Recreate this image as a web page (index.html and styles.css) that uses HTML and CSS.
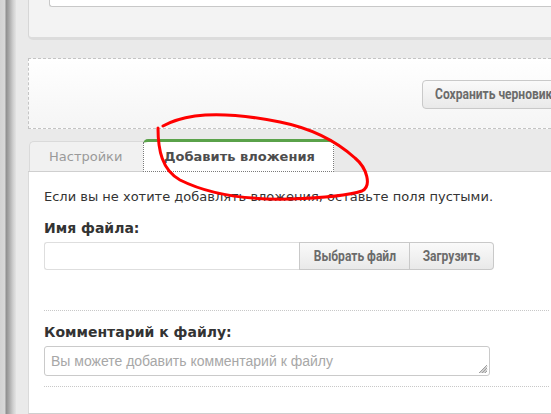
FILE: index.html
```html
<!DOCTYPE html>
<html lang="ru">
<head>
<meta charset="utf-8">
<title>Добавить вложения</title>
<link rel="stylesheet" href="styles.css">
</head>
<body>
<div class="screen">
  <div class="edge"></div>
  <div class="page">
    <div class="top-panel"><div class="top-input"></div></div>
    <div class="draft-box">
      <button class="btn draft-btn"><span class="btn-text">Сохранить черновик</span></button>
    </div>
    <div class="tabs">
      <div class="tab">Настройки</div>
      <div class="tab tab-active"><span class="tab-focus">Добавить вложения</span></div>
    </div>
    <div class="tab-body">
      <p class="hint">Если вы не хотите добавлять вложения, оставьте поля пустыми.</p>
      <div class="field-label">Имя файла:</div>
      <div class="file-row">
        <div class="file-input"></div>
        <button class="btn file-btn"><span class="btn-text">Выбрать файл</span></button>
        <button class="btn file-btn file-btn-last"><span class="btn-text">Загрузить</span></button>
      </div>
      <div class="sep sep-first"></div>
      <div class="field-label">Комментарий к файлу:</div>
      <div class="textarea">
        <span class="placeholder">Вы можете добавить комментарий к файлу</span>
        <svg class="grip" width="10" height="10" viewBox="0 0 10 10">
          <path d="M9 1 L1 9 M9 4 L4 9 M9 7 L7 9 M9 2.5 L2.5 9 M9 5.5 L5.5 9" stroke="#888" stroke-width="0.8"/>
        </svg>
      </div>
      <div class="sep sep-second"></div>
    </div>
  </div>
  <svg class="annotation" width="551" height="414" viewBox="0 0 551 414">
    <path d="M158,128 C158,150 162,170 180,180 C210,195 250,200 290,199 C320,198 350,195 362,191 C372,186 367,168 355,158 C335,140 310,128 280,122 C250,116 220,113 195,116 C182,118 170,122 163,126" fill="none" stroke="#ff0000" stroke-width="3" stroke-linecap="round" stroke-linejoin="round"/>
  </svg>
</div>
</body>
</html>
```

FILE: styles.css
```css
html, body {
  margin: 0;
  padding: 0;
  width: 551px;
  height: 414px;
  overflow: hidden;
  background: #eaeaea;
}

.screen {
  position: relative;
  display: flex;
  width: 551px;
  height: 414px;
  overflow: hidden;
}

.edge {
  flex: 0 0 16px;
  background: linear-gradient(to right, #d2d2d2 0, #d8d8d8 5px, #8e8e8e 6px, #a8a8a8 9px, #cfcfcf 13px, #e4e4e4 16px);
}

.page {
  flex: 1;
  min-width: 0;
  padding-left: 12px;
  background: #eaeaea;
  display: flex;
  flex-direction: column;
}

.page > * {
  flex-shrink: 0;
}

.top-panel {
  height: 37px;
  margin-right: -20px;
  background: #f3f3f3;
  border-left: 1px solid #d6d6d6;
  border-bottom: 3px solid #dcdcdc;
  border-bottom-left-radius: 5px;
  padding-left: 20px;
}

.top-input {
  height: 6px;
  background: #fff;
  border: 1px solid #c8c8c8;
  border-top: none;
  border-right: none;
  border-bottom-left-radius: 3px;
}

.draft-box {
  margin-top: 18px;
  height: 69px;
  margin-right: -20px;
  border: 1px dashed #c4c4c4;
  background: linear-gradient(to bottom, #ffffff, #f5f5f5);
  display: flex;
  align-items: center;
  padding-left: 393px;
}

.btn {
  font-family: Roboto, "Liberation Sans", sans-serif;
  font-weight: 700;
  font-size: 14px;
  color: #6b6b6b;
  background: linear-gradient(to bottom, #fafafa, #e9e9e9);
  border: 1px solid #c9c9c9;
  padding: 0;
  margin: 0;
  cursor: pointer;
  display: flex;
  align-items: center;
  justify-content: center;
  white-space: nowrap;
}

.btn-text {
  display: inline-block;
  transform: scaleX(0.86);
}

.draft-btn {
  height: 29px;
  width: 150px;
  justify-content: flex-start;
  padding: 0;
  border-radius: 4px;
  margin-top: 1px;
  overflow: hidden;
}

.draft-btn .btn-text {
  transform-origin: 0 50%;
  margin-left: 12px;
}

.tabs {
  display: flex;
  align-items: flex-end;
  padding-top: 10px;
  border-bottom: 1px solid #cfcfcf;
  margin-right: -20px;
  height: 32px;
}

.tab {
  font-family: "DejaVu Sans", Verdana, sans-serif;
  font-size: 13px;
  color: #9a9a9a;
  height: 30px;
  box-sizing: border-box;
  width: 114px;
  margin-left: 1px;
  padding-left: 19px;
  display: flex;
  align-items: center;
  background: #f1f1f1;
  border: 1px solid #dadada;
  border-bottom: none;
  border-right: none;
  border-top-left-radius: 5px;
}

.tab-active {
  width: 191px;
  margin-left: 0;
  height: 33px;
  padding: 0;
  margin-bottom: -1px;
  background: #fff;
  border: none;
  border-top: 3px solid #5aa24a;
  border-radius: 5px 5px 0 0;
  color: #4d4d4d;
  font-weight: 700;
}

.tab-focus {
  display: flex;
  align-items: center;
  box-sizing: border-box;
  width: 100%;
  height: 100%;
  padding-left: 20px;
  border: 1px dotted #7a7a7a;
  border-top: none;
}

.tab-body {
  margin-right: -19px;
  background: #fff;
  border-left: 1px solid #dadada;
  padding: 17px 21px 0 15px;
  display: flex;
  flex-direction: column;
  height: 224px;
  border-bottom: 1px solid #cfcfcf;
}

.hint {
  margin: 0;
  font-family: "DejaVu Sans", Verdana, sans-serif;
  font-size: 13px;
  line-height: 16px;
  color: #333;
  white-space: nowrap;
}

.field-label {
  font-family: "DejaVu Sans", Verdana, sans-serif;
  font-weight: 700;
  font-size: 14px;
  line-height: 16px;
  color: #333;
  margin-top: 15px;
}

.file-row {
  display: flex;
  margin-top: 6px;
  height: 28px;
}

.file-input {
  width: 254px;
  border: 1px solid #dedede;
  border-right: none;
  border-radius: 3px 0 0 3px;
  background: #fff;
}

.file-btn {
  height: 28px;
  width: 111px;
}

.file-btn-last {
  width: 84px;
  border-left: none;
  border-radius: 0 4px 4px 0;
}

.sep {
  border-top: 1px dotted #c8c8c8;
  height: 0;
}

.sep-first {
  margin-top: 40px;
}

.sep-first + .field-label {
  margin-top: 13px;
}

.textarea {
  position: relative;
  margin-top: 6px;
  width: 446px;
  height: 30px;
  box-sizing: border-box;
  border: 1px solid #cacaca;
  border-radius: 3px;
  background: #fff;
  display: flex;
  align-items: center;
  padding-left: 6px;
}

.placeholder {
  font-family: "Liberation Sans", Arial, sans-serif;
  font-size: 14px;
  color: #a7a7a7;
}

.grip {
  position: absolute;
  right: 1px;
  bottom: 1px;
}

.sep-second {
  margin-top: 10px;
}

.annotation {
  position: absolute;
  left: 0;
  top: 0;
  pointer-events: none;
}
```
